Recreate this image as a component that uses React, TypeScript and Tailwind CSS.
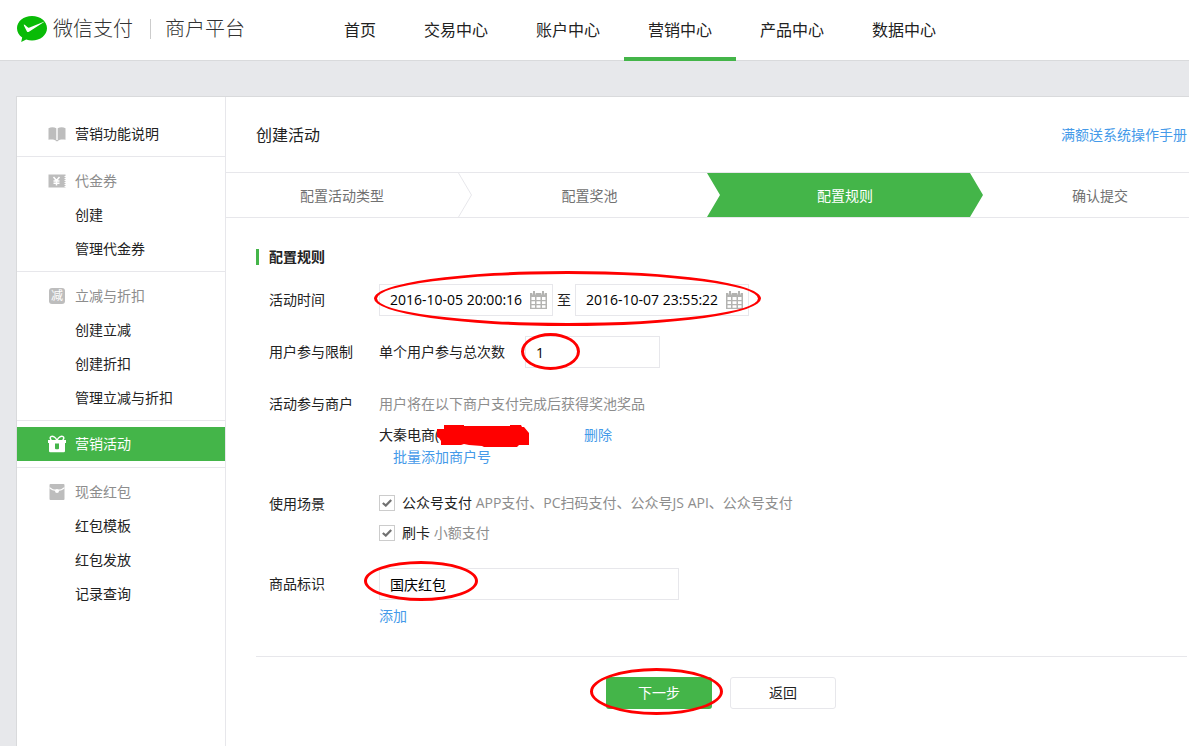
import type { ReactNode } from 'react';
import clsx from 'clsx';

const navItems = ['首页', '交易中心', '账户中心', '营销中心', '产品中心', '数据中心'];
const activeNav = '营销中心';

const BookIcon = () => (
  <svg width="18" height="16" viewBox="0 0 18 16" fill="#bdbdbd">
    <path d="M0.5 2.2C2.8 0.8 6 0.8 8.3 2.2V14.6C6 13.2 2.8 13.2 0.5 13.8Z" />
    <path d="M9.7 2.2C12 0.8 15.2 0.8 17.5 2.2V13.8C15.2 13.2 12 13.2 9.7 14.6Z" />
    <path d="M7.8 14H10.2V15.2H7.8Z" />
  </svg>
);

const CouponIcon = () => (
  <svg width="18" height="14" viewBox="0 0 18 14">
    <path
      d="M0.5 0.5H17.5V2H16.5V3H17.5V4H16.5V5H17.5V6H16.5V7H17.5V8H16.5V9H17.5V10H16.5V11H17.5V12H16.5V13H17.5V13.5H0.5Z"
      fill="#bdbdbd"
    />
    <path
      d="M5.5 3L8.5 6.5L11.5 3M8.5 6.5V11.5M5.5 7H11.5M5.5 9.2H11.5"
      stroke="#fff"
      strokeWidth="1.5"
      fill="none"
    />
  </svg>
);

const DiscountIcon = () => (
  <span className="flex h-4 w-4 items-center justify-center rounded-[3px] bg-[#bdbdbd] text-[12px] leading-4 text-white">
    减
  </span>
);

const GiftIcon = () => (
  <svg width="18" height="18" viewBox="0 0 18 18">
    <path
      d="M8.8 5C7.5 2.2 4.8 0.8 3 1.6C1.6 2.4 2.2 4.2 3.4 4.8M9.2 5C10.5 2.2 13.2 0.8 15 1.6C16.4 2.4 15.8 4.2 14.6 4.8"
      stroke="#fff"
      strokeWidth="1.5"
      fill="none"
    />
    <path d="M0 5H18V8H0Z" fill="#fff" />
    <path d="M1 8H17V16Q17 17.3 15.7 17.3H2.3Q1 17.3 1 16Z" fill="#fff" />
    <path d="M7 8.6H11V13.2Q11 14.2 10 14.2H8Q7 14.2 7 13.2Z" fill="#44b549" />
  </svg>
);

const EnvelopeIcon = () => (
  <svg width="16" height="16" viewBox="0 0 16 16">
    <rect x="0.5" width="15" height="16" rx="1" fill="#bdbdbd" />
    <path d="M0.5 3.6C4 7.2 12 7.2 15.5 3.6" stroke="#fff" strokeWidth="1.2" fill="none" />
    <circle cx="8" cy="7" r="2" fill="#fff" />
  </svg>
);

const CalendarIcon = () => (
  <svg width="17" height="18" viewBox="0 0 17 18" fill="none">
    <path d="M0 2H17V18H0Z" fill="#b3b3b1" />
    <path d="M3 0H5V4H3ZM12 0H14V4H12Z" fill="#b3b3b1" />
    <path d="M2.5 1V3.5M5.5 1V3.5M11.5 1V3.5M14.5 1V3.5" stroke="#fff" strokeWidth="0.6" />
    <path
      d="M1.5 6H5V9H1.5ZM6.5 6H10.5V9H6.5ZM12 6H15.5V9H12ZM1.5 10.3H5V13H1.5ZM6.5 10.3H10.5V13H6.5ZM12 10.3H15.5V13H12ZM1.5 14.3H5V16.8H1.5ZM6.5 14.3H10.5V16.8H6.5ZM12 14.3H15.5V16.8H12Z"
      fill="#fff"
    />
  </svg>
);

type Group = { title: string; icon: ReactNode; kind?: 'link' | 'active'; items?: string[] };

const groups: Group[] = [
  { title: '营销功能说明', icon: <BookIcon />, kind: 'link' },
  { title: '代金券', icon: <CouponIcon />, items: ['创建', '管理代金券'] },
  { title: '立减与折扣', icon: <DiscountIcon />, items: ['创建立减', '创建折扣', '管理立减与折扣'] },
  { title: '营销活动', icon: <GiftIcon />, kind: 'active' },
  { title: '现金红包', icon: <EnvelopeIcon />, items: ['红包模板', '红包发放', '记录查询'] },
];

const Header = () => (
  <header className="flex h-[61px] border-b border-[#d9dadc] bg-white">
    <a href="#" className="flex h-[57px] w-[320px] shrink-0 items-center pl-4 text-[20px] font-light text-[#333]">
      <svg width="32" height="28" viewBox="0 0 32 28" className="mr-[5px]">
        <path
          d="M16 1C7.6 1 1 6.4 1 13.2C1 17 3 20.2 6.2 22.5L5.2 27L10.2 24.5C12 25.1 14 25.4 16 25.4C24.4 25.4 31 20 31 13.2C31 6.4 24.4 1 16 1Z"
          fill="#09bb07"
        />
        <path
          d="M7.8 9.6C8.6 9.4 10.2 11.4 12 12.4C12.8 12.8 13.4 12.7 14.2 12.3L29.2 6.2L13 16.8C12 17.4 11.2 17 10.8 16.2L8 10.8Z"
          fill="#fff"
        />
      </svg>
      <span>微信支付</span>
      <span className="mr-3.5 ml-[17px] h-5 w-px bg-[#ccc]" />
      <span>商户平台</span>
    </a>
    <nav className="flex text-[16px] text-[#222]">
      {navItems.map((item) => (
        <a
          key={item}
          href="#"
          className={clsx(
            'h-[61px] px-6 leading-[61px] whitespace-nowrap',
            item === activeNav && 'border-b-4 border-[#44b549]',
          )}
        >
          {item}
        </a>
      ))}
    </nav>
  </header>
);

const Sidebar = () => (
  <aside className="w-[209px] shrink-0 border-r border-[#e7e7eb]">
    {groups.map(({ title, icon, kind, items = [] }) => {
      const row = (
        <>
          <span className="flex w-5 justify-center">{icon}</span>
          {title}
        </>
      );
      return (
        <div
          key={title}
          className={clsx(
            'border-b border-[#e7e7eb] first:pt-5 last:border-b-0',
            kind === 'active' ? 'py-1.5' : 'pt-[7px] pb-[5px]',
          )}
        >
          {kind ? (
            <a
              href="#"
              className={clsx(
                'flex h-[34px] items-center gap-2 pl-[30px]',
                kind === 'active' && 'bg-[#44b549] text-white',
              )}
            >
              {row}
            </a>
          ) : (
            <h2 className="flex h-[34px] items-center gap-2 pl-[30px] text-[#8d8d8d]">{row}</h2>
          )}
          {items.map((item) => (
            <a key={item} href="#" className="block h-[34px] pl-[58px] leading-[34px]">
              {item}
            </a>
          ))}
        </div>
      );
    })}
  </aside>
);

const Steps = () => (
  <ol className="flex h-[46px] overflow-hidden border-y border-[#e7e7eb] text-center leading-[46px] text-[#717171]">
    <li className="shrink-0 grow basis-[232px]">配置活动类型</li>
    <li aria-hidden="true" className="shrink-0">
      <svg width="14" height="44" viewBox="0 0 14 44" fill="none">
        <path d="M0.5 0L13.5 22L0.5 44" stroke="#e7e7eb" />
      </svg>
    </li>
    <li className="shrink-0 grow basis-[235px]">配置奖池</li>
    <li className="shrink-0 grow basis-[276px] bg-[#44b549] text-white [clip-path:polygon(0_0,calc(100%-13px)_0,100%_50%,calc(100%-13px)_100%,0_100%,13px_50%)]">
      配置规则
    </li>
    <li className="shrink-0 grow basis-[234px]">确认提交</li>
  </ol>
);

// red hand-drawn ring laid over a control
const Ring = ({ className }: { className: string }) => (
  <span
    aria-hidden="true"
    className={clsx('pointer-events-none absolute z-10 rounded-[50%] border-3 border-[#f00]', className)}
  />
);

const Row = ({ label, htmlFor, children }: { label: string; htmlFor?: string; children: ReactNode }) => (
  <div className="flex">
    {htmlFor ? (
      <label htmlFor={htmlFor} className="w-[110px] shrink-0 leading-8">
        {label}
      </label>
    ) : (
      <span className="w-[110px] shrink-0 leading-8">{label}</span>
    )}
    <div className="min-w-0 flex-1">{children}</div>
  </div>
);

const DateInput = ({ id, label, value }: { id: string; label: string; value: string }) => (
  <span className="flex h-8 w-[174px] items-center border border-[#e7e7eb] pr-[5px] pl-2.5">
    <input
      id={id}
      aria-label={label}
      defaultValue={value}
      className="min-w-0 flex-1 text-black outline-none"
    />
    <CalendarIcon />
  </span>
);

const Scene = ({ id, name, detail }: { id: string; name: string; detail: string }) => (
  <div className="flex h-[30px] items-center gap-[7px]">
    <span className="grid h-4 w-4 place-items-center">
      <input
        id={id}
        type="checkbox"
        defaultChecked
        className="peer col-start-1 row-start-1 h-4 w-4 appearance-none border border-[#ccc] bg-white"
      />
      <svg
        width="10"
        height="8"
        viewBox="0 0 10 8"
        className="pointer-events-none invisible col-start-1 row-start-1 peer-checked:visible"
      >
        <path d="M0.8 4L3.8 6.6L9.2 1" stroke="#717171" strokeWidth="2.2" fill="none" />
      </svg>
    </span>
    <label htmlFor={id}>
      {name} <span className="text-[#8d8d8d]">{detail}</span>
    </label>
  </div>
);

const RulesForm = () => (
  <form className="pr-0.5 pl-[30px]" onSubmit={(e) => e.preventDefault()}>
    <h2 className="mt-[29px] flex items-center gap-2.5 leading-5 font-bold">
      <span className="h-4 w-[3px] bg-[#44b549]" />
      配置规则
    </h2>
    <div className="mt-[17px] flex flex-col gap-5 pl-[13px]">
      <Row label="活动时间" htmlFor="start">
        <div className="relative flex w-[370px] items-center justify-between">
          <DateInput id="start" label="活动时间" value="2016-10-05 20:00:16" />
          <span>至</span>
          <DateInput id="end" label="结束时间" value="2016-10-07 23:55:22" />
          <Ring className="-top-[13px] -right-3 -bottom-[10px] -left-[5px]" />
        </div>
      </Row>
      <Row label="用户参与限制">
        <div className="flex">
          <label htmlFor="limit" className="w-[146px] leading-8">
            单个用户参与总次数
          </label>
          <div className="relative">
            <input
              id="limit"
              defaultValue="1"
              className="h-8 w-[135px] border border-[#e7e7eb] px-2.5 text-black outline-none"
            />
            <Ring className="-top-[3px] -left-1 h-[37px] w-[59px]" />
          </div>
        </div>
      </Row>
      <Row label="活动参与商户">
        <p className="mb-1 leading-8 text-[#8d8d8d]">用户将在以下商户支付完成后获得奖池奖品</p>
        <div className="flex leading-[22px]">
          <span className="relative w-[205px]">
            大秦电商(
            <svg
              aria-hidden="true"
              width="92"
              height="24"
              viewBox="0 0 92 24"
              className="absolute top-0 left-[58px]"
            >
              <path
                d="M7 1H27V2H73V1H84L85 3H87L92 9V21H82L80 23H47L45 22L32 21L27 20L24 21H4V17L2 14L0 13V5H7Z"
                fill="#f00"
              />
            </svg>
          </span>
          <a href="#" className="text-[#459ae9]">
            删除
          </a>
        </div>
        <a href="#" className="ml-3.5 block w-fit leading-[22px] text-[#459ae9]">
          批量添加商户号
        </a>
      </Row>
      <Row label="使用场景">
        <Scene id="mp" name="公众号支付" detail="APP支付、PC扫码支付、公众号JS API、公众号支付" />
        <Scene id="card" name="刷卡" detail="小额支付" />
      </Row>
      <Row label="商品标识" htmlFor="tag">
        <div className="relative w-[300px]">
          <input
            id="tag"
            defaultValue="国庆红包"
            className="block h-8 w-full border border-[#e7e7eb] px-2.5 text-black outline-none"
          />
          <Ring className="-top-[7px] -left-[15px] h-10 w-[114px]" />
        </div>
        <a href="#" className="block w-fit leading-8 text-[#459ae9]">
          添加
        </a>
      </Row>
    </div>
    <div className="mt-6 flex justify-center gap-[18px] border-t border-[#e7e7eb] py-5 pr-px">
      <div className="relative">
        <button type="submit" className="h-8 w-[106px] rounded-[3px] bg-[#44b549] text-white">
          下一步
        </button>
        <Ring className="-top-[9px] -left-4 h-[47px] w-[133px]" />
      </div>
      <button type="button" className="h-8 w-[106px] rounded-[3px] border border-[#e7e7eb] bg-white">
        返回
      </button>
    </div>
  </form>
);

const App = () => {
  return (
    <div
      lang="zh-CN"
      className="flex min-h-screen flex-col overflow-x-hidden bg-[#e7e8eb] font-['Open_Sans','Noto_Sans_CJK_SC',sans-serif] text-[14px] leading-5 text-[#222]"
    >
      <Header />
      <div className="mt-[35px] ml-4 flex flex-1 border-t border-l border-[#d9dadc] bg-white">
        <Sidebar />
        <main className="min-w-0 flex-1">
          <div className="flex h-[75px] items-center justify-between pr-0.5 pl-[30px]">
            <h1 className="text-[16px]">创建活动</h1>
            <a href="#" className="text-[#459ae9]">
              满额送系统操作手册
            </a>
          </div>
          <Steps />
          <RulesForm />
        </main>
      </div>
    </div>
  );
};

export default App;
